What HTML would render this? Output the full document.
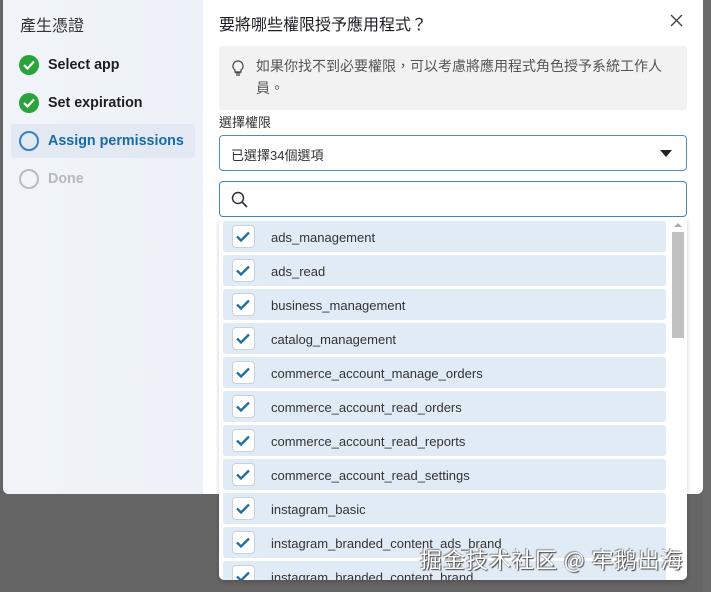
<!DOCTYPE html>
<html><head><meta charset="utf-8"><style>
*{margin:0;padding:0;box-sizing:border-box}
body{width:711px;height:592px;background:#656565;position:relative;overflow:hidden;font-family:"Liberation Sans","Noto Sans CJK TC",sans-serif;color:#1c1e21}
.rstrip{position:absolute;left:703px;top:0;width:8px;height:592px;background:#6a6a6a}
.modal{position:absolute;left:3px;top:0;width:700px;height:494px;background:#fff;border-radius:0 0 6px 6px;overflow:hidden}
.left{position:absolute;left:0;top:0;width:200px;height:494px;background:linear-gradient(90deg,#f0f4f9,#edf2f8)}
.left h1{position:absolute;left:17px;top:12px;font-size:16px;font-weight:normal;color:#333}
.step{position:absolute;left:8px;height:34px;width:184px;font-size:14.3px;font-weight:bold;display:flex;align-items:center;padding-left:8px}
.ic{width:20px;height:20px;border-radius:50%;margin-right:9px;display:flex;align-items:center;justify-content:center}
.done{background:#2aa33a}
.right h2{position:absolute;left:216px;top:11px;font-size:16px;font-weight:normal;color:#1c1e21}
.close{position:absolute;left:667px;top:14px}
.tip{position:absolute;left:219px;top:46px;width:468px;height:64px;background:#f2f2f2;border-radius:3px;font-size:14px;color:#555;padding:9px 20px 0 37px;line-height:22px}
.lbl{position:absolute;left:219px;top:112px;font-size:13px;color:#333}
.sel{position:absolute;left:219px;top:135px;width:468px;height:36px;border:1px solid #4f8fc0;border-radius:4px;font-size:13px;color:#333;padding:9px 11px}
.tri{position:absolute;right:14px;top:14px;width:0;height:0;border-left:6px solid transparent;border-right:6px solid transparent;border-top:7px solid #222}
.search{position:absolute;left:219px;top:181px;width:468px;height:36px;border:1px solid #3f86ba;border-radius:4px;background:#fff}
.list{position:absolute;left:219px;top:218px;width:468px;height:362px;background:#fff;border-radius:0 0 5px 5px;overflow:hidden;box-shadow:0 2px 4px rgba(0,0,0,.2)}
.it{position:absolute;left:4px;width:443px;height:31px;background:#e0ebf6;border-radius:3px;font-size:13px;color:#333;line-height:33px;padding-left:48px}
.cb{position:absolute;left:9px;top:4px;width:23px;height:23px;background:#fff;border:1px solid #c8d2dc;border-radius:4px;line-height:0}
.sb{position:absolute;left:453px;top:14px;width:12px;height:106px;background:#c1c1c1}
.wm{position:absolute;left:420px;top:544px;font-size:22px;color:#fff;text-shadow:1px 1px 1px #444,-1px -1px 1px #888;letter-spacing:1px;font-family:"Noto Sans CJK SC",sans-serif;line-height:30px}
</style></head><body>
<div class="rstrip"></div>
<div class="modal">
<div class="left">
<h1>產生憑證</h1>
<div class="step" style="top:48px"><div class="ic done"><svg width="12" height="10"><path d="M1 5l3.5 3.5L11 1.5" stroke="#fff" stroke-width="2.2" fill="none"/></svg></div>Select app</div>
<div class="step" style="top:86px"><div class="ic done"><svg width="12" height="10"><path d="M1 5l3.5 3.5L11 1.5" stroke="#fff" stroke-width="2.2" fill="none"/></svg></div>Set expiration</div>
<div class="step" style="top:124px;background:#e2e9f2;color:#1a6aa6;border-radius:3px"><div class="ic" style="border:2px solid #3a7fc5"></div>Assign permissions</div>
<div class="step" style="top:162px;color:#b5b8bc"><div class="ic" style="border:2px solid #b8bbbf"></div>Done</div>
</div>
<div class="right">
<h2>要將哪些權限授予應用程式？</h2>
<svg class="close" width="13" height="13"><path d="M1 1l11 11M12 1L1 12" stroke="#444" stroke-width="1.4"/></svg>
</div>
</div>
<div class="tip"><svg style="position:absolute;left:13px;top:14px" width="12" height="16"><path d="M6 1a5 5 0 0 0-3 9v2h6v-2a5 5 0 0 0-3-9zM3.5 13h5M4 15h4" stroke="#444" stroke-width="1.2" fill="none"/></svg>如果你找不到必要權限，可以考慮將應用程式角色授予系統工作人員。</div>
<div class="lbl">選擇權限</div>
<div class="sel">已選擇34個選項<div class="tri"></div></div>
<div class="search"><svg style="position:absolute;left:11px;top:9px" width="18" height="18"><circle cx="7" cy="7" r="5.5" stroke="#333" stroke-width="1.5" fill="none"/><path d="M11 11l5 5" stroke="#333" stroke-width="1.6"/></svg></div>
<div class="list">
<div class="sb"></div>
<div style="position:absolute;left:455px;top:5px;width:0;height:0;border-left:4px solid transparent;border-right:4px solid transparent;border-bottom:4px solid #aaa"></div>
<div class="it" style="top:3px"><div class="cb"><svg width="21" height="21"><path d="M4 10.5l4 4 8-8" stroke="#1d6fa5" stroke-width="2.3" fill="none"/></svg></div>ads_management</div>
<div class="it" style="top:37px"><div class="cb"><svg width="21" height="21"><path d="M4 10.5l4 4 8-8" stroke="#1d6fa5" stroke-width="2.3" fill="none"/></svg></div>ads_read</div>
<div class="it" style="top:71px"><div class="cb"><svg width="21" height="21"><path d="M4 10.5l4 4 8-8" stroke="#1d6fa5" stroke-width="2.3" fill="none"/></svg></div>business_management</div>
<div class="it" style="top:105px"><div class="cb"><svg width="21" height="21"><path d="M4 10.5l4 4 8-8" stroke="#1d6fa5" stroke-width="2.3" fill="none"/></svg></div>catalog_management</div>
<div class="it" style="top:139px"><div class="cb"><svg width="21" height="21"><path d="M4 10.5l4 4 8-8" stroke="#1d6fa5" stroke-width="2.3" fill="none"/></svg></div>commerce_account_manage_orders</div>
<div class="it" style="top:173px"><div class="cb"><svg width="21" height="21"><path d="M4 10.5l4 4 8-8" stroke="#1d6fa5" stroke-width="2.3" fill="none"/></svg></div>commerce_account_read_orders</div>
<div class="it" style="top:207px"><div class="cb"><svg width="21" height="21"><path d="M4 10.5l4 4 8-8" stroke="#1d6fa5" stroke-width="2.3" fill="none"/></svg></div>commerce_account_read_reports</div>
<div class="it" style="top:241px"><div class="cb"><svg width="21" height="21"><path d="M4 10.5l4 4 8-8" stroke="#1d6fa5" stroke-width="2.3" fill="none"/></svg></div>commerce_account_read_settings</div>
<div class="it" style="top:275px"><div class="cb"><svg width="21" height="21"><path d="M4 10.5l4 4 8-8" stroke="#1d6fa5" stroke-width="2.3" fill="none"/></svg></div>instagram_basic</div>
<div class="it" style="top:309px"><div class="cb"><svg width="21" height="21"><path d="M4 10.5l4 4 8-8" stroke="#1d6fa5" stroke-width="2.3" fill="none"/></svg></div>instagram_branded_content_ads_brand</div>
<div class="it" style="top:343px"><div class="cb"><svg width="21" height="21"><path d="M4 10.5l4 4 8-8" stroke="#1d6fa5" stroke-width="2.3" fill="none"/></svg></div>instagram_branded_content_brand</div>
</div>
<div class="wm">掘金技术社区 @ 牢鹅出海</div>
</body></html>
